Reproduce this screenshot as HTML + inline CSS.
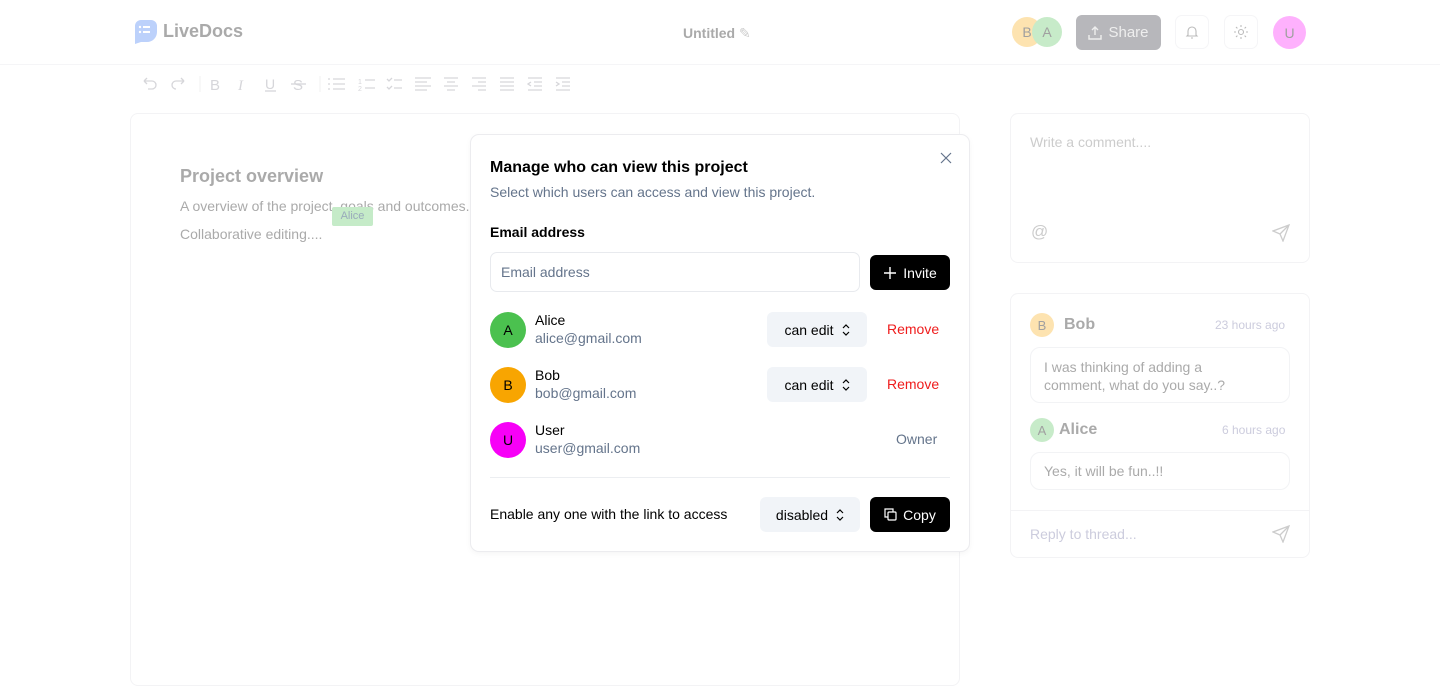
<!DOCTYPE html>
<html><head><meta charset="utf-8"><style>
*{box-sizing:border-box;margin:0;padding:0}
body{width:1440px;height:686px;overflow:hidden;background:#fff;font-family:"Liberation Sans",Arial,sans-serif;position:relative;color:#000}
.abs{position:absolute}
.hdr{left:0;top:0;width:1440px;height:65px;border-bottom:1px solid #f5f5f7}
.logo{left:133px;top:20px;width:24px;height:24px}
.logot{left:163px;top:21px;font-size:18px;font-weight:bold;color:#aaa}
.untitled{left:683px;top:25px;font-size:14px;font-weight:bold;color:#aaa}
.av{border-radius:50%;display:flex;align-items:center;justify-content:center;font-size:14px;color:#a0a0a0}
.share{left:1076px;top:15px;width:85px;height:35px;background:#b7b7bb;border-radius:6px;color:#eee;font-size:15px;display:flex;align-items:center;justify-content:center;gap:6px}
.ib{width:34px;height:34px;border:1px solid #f5f5f7;border-radius:7px;display:flex;align-items:center;justify-content:center}
.card{border:1px solid #f3f3f5;border-radius:8px}
.modal{left:470px;top:134px;width:500px;height:418px;background:#fff;border:1px solid #ececef;border-radius:9px;box-shadow:0 2px 6px rgba(0,0,0,.04)}
.m{position:absolute}
.gray{color:#64748b}
.sel{background:#f1f4f8;border-radius:6px;display:flex;align-items:center;justify-content:center;font-size:14px;gap:8px}
.red{color:#ef1c1c;font-size:14px}
.blk{background:#000;color:#fff;border-radius:6px;display:flex;align-items:center;justify-content:center;font-size:14px;gap:6px}
.bub{border:1px solid #f2f3f5;border-radius:10px;color:#aaa;font-size:14px;padding:0 60px 0 13px;line-height:18px}
</style></head><body>
<div class="abs hdr"></div>
<svg class="abs logo" viewBox="0 0 24 24"><path d="M2 6a6 6 0 0 1 6-6h10a6 6 0 0 1 6 6v6a10 10 0 0 1-10 10H8l-6 2z" fill="#bcd1fb"/><circle cx="7" cy="7" r="1.2" fill="#fff"/><circle cx="7" cy="12" r="1.2" fill="#fff"/><rect x="10" y="6" width="7" height="2" fill="#fff"/><rect x="10" y="11" width="7" height="2" fill="#fff"/></svg>
<div class="abs logot">LiveDocs</div>
<div class="abs untitled">Untitled <span style="font-weight:normal;color:#ccc">✎</span></div>
<div class="abs av" style="left:1012px;top:17px;width:30px;height:30px;background:#fde3b0">B</div>
<div class="abs av" style="left:1032px;top:17px;width:30px;height:30px;background:#c7ebc9">A</div>
<div class="abs share"><svg width="14" height="14" viewBox="0 0 14 14" fill="none" stroke="#eee" stroke-width="1.4"><path d="M7 9V1M4 4l3-3 3 3M1 9v4h12V9"/></svg>Share</div>
<div class="abs ib" style="left:1175px;top:15px"><svg width="14" height="14" viewBox="0 0 14 14" fill="none" stroke="#bbb" stroke-width="1.1"><path d="M3 10V6a4 4 0 0 1 8 0v4l1 1H2zM6 13h2"/></svg></div>
<div class="abs ib" style="left:1224px;top:15px"><svg width="14" height="14" viewBox="0 0 14 14" fill="none" stroke="#bbb" stroke-width="1.1"><circle cx="7" cy="7" r="2.5"/><path d="M7 0v2M7 12v2M0 7h2M12 7h2M2 2l1.4 1.4M10.6 10.6L12 12M2 12l1.4-1.4M10.6 3.4L12 2"/></svg></div>
<div class="abs av" style="left:1273px;top:16px;width:33px;height:33px;background:#feb1fd">U</div>
<svg class="abs" style="left:140px;top:74px" width="440" height="20" viewBox="0 0 440 20" fill="none" stroke="#d6d6da" stroke-width="1.3">
<path d="M4 7h8a4 4 0 0 1 0 8H8M4 7l3-3M4 7l3 3"/><path d="M44 7h-8a4 4 0 0 0 0 8M44 7l-3-3M44 7l-3 3"/>
<line x1="60" y1="2" x2="60" y2="18" stroke="#f3f3f3"/>
<text x="70" y="16" font-size="15" fill="#d6d6da" stroke="none" font-family="Liberation Sans">B</text>
<text x="98" y="16" font-size="15" fill="#d6d6da" stroke="none" font-style="italic" font-family="Liberation Serif">I</text>
<text x="125" y="15" font-size="14" fill="#d6d6da" stroke="none" font-family="Liberation Sans">U</text><line x1="125" y1="17" x2="136" y2="17"/>
<text x="153" y="16" font-size="15" fill="#d6d6da" stroke="none" font-family="Liberation Sans">S</text><line x1="151" y1="10" x2="166" y2="10"/>
<line x1="180" y1="2" x2="180" y2="18" stroke="#f3f3f3"/>
<path d="M193 5h12M193 10h12M193 15h12M188 5h2M188 10h2M188 15h2"/>
<path d="M225 6h10M225 14h10"/><text x="218" y="10" font-size="7" fill="#d6d6da" stroke="none">1</text><text x="218" y="17" font-size="7" fill="#d6d6da" stroke="none">2</text>
<path d="M247 5l2 2 3-3M247 13l2 2 3-3M254 6h8M254 14h8"/>
<path d="M275 4h16M275 8h12M275 12h16M275 16h12"/>
<path d="M304 4h14M307 8h8M304 12h14M307 16h8"/>
<path d="M332 4h14M338 8h8M332 12h14M338 16h8"/>
<path d="M360 4h14M360 8h14M360 12h14M360 16h14"/>
<path d="M388 4h14M394 8h8M394 12h8M388 16h14M391 8l-3 2 3 2"/>
<path d="M416 4h14M422 8h8M422 12h8M416 16h14M416 8l3 2-3 2"/>
</svg>
<div class="abs card" style="left:130px;top:113px;width:830px;height:573px"></div>
<div class="abs" style="left:180px;top:166px;font-size:18px;font-weight:bold;color:#aaa">Project overview</div>
<div class="abs" style="left:180px;top:198px;font-size:14px;color:#aaa">A overview of the project, goals and outcomes.</div>
<div class="abs" style="left:180px;top:226px;font-size:14px;color:#aaa">Collaborative editing....</div>
<div class="abs" style="left:332px;top:207px;width:41px;height:19px;background:#c5ebc8;color:#9ab;font-size:11px;text-align:center;line-height:19px;border-radius:2px">Alice</div>
<div class="abs card" style="left:1010px;top:113px;width:300px;height:150px"></div>
<div class="abs" style="left:1030px;top:134px;font-size:14px;color:#ccc">Write a comment....</div>
<div class="abs" style="left:1031px;top:222px;font-size:17px;color:#ccc">@</div>
<svg class="abs" style="left:1272px;top:224px" width="18" height="18" viewBox="0 0 18 18" fill="none" stroke="#ccc" stroke-width="1.3"><path d="M17 1L1 7l7 3 3 7zM17 1L8 10"/></svg>
<div class="abs card" style="left:1010px;top:293px;width:300px;height:265px"></div>
<div class="abs av" style="left:1030px;top:313px;width:24px;height:24px;background:#fde3b0;font-size:13px">B</div>
<div class="abs" style="left:1064px;top:316px;font-size:16px;font-weight:bold;color:#aaa">Bob</div>
<div class="abs" style="left:1215px;top:318px;font-size:12px;color:#ccd">23 hours ago</div>
<div class="abs bub" style="left:1030px;top:347px;width:260px;height:56px;padding-top:10px">I was thinking of adding a comment, what do you say..?</div>
<div class="abs av" style="left:1030px;top:418px;width:24px;height:24px;background:#c7ebc9;font-size:13px">A</div>
<div class="abs" style="left:1059px;top:421px;font-size:16px;font-weight:bold;color:#aaa">Alice</div>
<div class="abs" style="left:1222px;top:423px;font-size:12px;color:#ccd">6 hours ago</div>
<div class="abs bub" style="left:1030px;top:452px;width:260px;height:38px;line-height:36px">Yes, it will be fun..!!</div>
<div class="abs" style="left:1011px;top:510px;width:298px;border-top:1px solid #f3f3f5"></div>
<div class="abs" style="left:1030px;top:526px;font-size:14px;color:#ccd">Reply to thread...</div>
<svg class="abs" style="left:1272px;top:525px" width="18" height="18" viewBox="0 0 18 18" fill="none" stroke="#ccc" stroke-width="1.3"><path d="M17 1L1 7l7 3 3 7zM17 1L8 10"/></svg>

<div class="abs modal">
<svg class="m" style="left:469px;top:17px" width="12" height="12" viewBox="0 0 12 12" stroke="#64748b" stroke-width="1.2"><path d="M1 1l10 10M11 1L1 11"/></svg>
<div class="m" style="left:19px;top:24px;font-size:16px;font-weight:bold">Manage who can view this project</div>
<div class="m gray" style="left:19px;top:49px;font-size:14px">Select which users can access and view this project.</div>
<div class="m" style="left:19px;top:89px;font-size:14px;font-weight:bold">Email address</div>
<div class="m" style="left:19px;top:117px;width:370px;height:40px;border:1px solid #e8eaee;border-radius:7px;font-size:14px;color:#64748b;padding:11px 10px">Email address</div>
<div class="m blk" style="left:399px;top:120px;width:80px;height:35px"><svg width="14" height="14" viewBox="0 0 14 14" stroke="#fff" stroke-width="1.4"><path d="M7 1v12M1 7h12"/></svg>Invite</div>

<div class="m av" style="left:19px;top:177px;width:36px;height:36px;background:#4bc14f;color:#000">A</div>
<div class="m" style="left:64px;top:177px;font-size:14px">Alice</div>
<div class="m gray" style="left:64px;top:195px;font-size:14px">alice@gmail.com</div>
<div class="m sel" style="left:296px;top:177px;width:100px;height:35px">can edit <svg width="8" height="12" viewBox="0 0 8 12" fill="none" stroke="#000" stroke-width="1.2"><path d="M1 4l3-3 3 3M1 8l3 3 3-3"/></svg></div>
<div class="m red" style="left:416px;top:186px">Remove</div>

<div class="m av" style="left:19px;top:232px;width:36px;height:36px;background:#f8a501;color:#000">B</div>
<div class="m" style="left:64px;top:232px;font-size:14px">Bob</div>
<div class="m gray" style="left:64px;top:250px;font-size:14px">bob@gmail.com</div>
<div class="m sel" style="left:296px;top:232px;width:100px;height:35px">can edit <svg width="8" height="12" viewBox="0 0 8 12" fill="none" stroke="#000" stroke-width="1.2"><path d="M1 4l3-3 3 3M1 8l3 3 3-3"/></svg></div>
<div class="m red" style="left:416px;top:241px">Remove</div>

<div class="m av" style="left:19px;top:287px;width:36px;height:36px;background:#f700f7;color:#000">U</div>
<div class="m" style="left:64px;top:287px;font-size:14px">User</div>
<div class="m gray" style="left:64px;top:305px;font-size:14px">user@gmail.com</div>
<div class="m gray" style="left:425px;top:296px;font-size:14px">Owner</div>

<div class="m" style="left:19px;top:342px;width:460px;border-top:1px solid #eceef1"></div>
<div class="m" style="left:19px;top:371px;font-size:14px">Enable any one with the link to access</div>
<div class="m sel" style="left:289px;top:362px;width:100px;height:35px">disabled <svg width="8" height="12" viewBox="0 0 8 12" fill="none" stroke="#000" stroke-width="1.2"><path d="M1 4l3-3 3 3M1 8l3 3 3-3"/></svg></div>
<div class="m blk" style="left:399px;top:362px;width:80px;height:35px"><svg width="13" height="13" viewBox="0 0 13 13" fill="none" stroke="#fff" stroke-width="1.2"><rect x="4" y="4" width="8" height="8" rx="1"/><path d="M9 4V1H1v8h3"/></svg>Copy</div>
</div>
</body></html>
